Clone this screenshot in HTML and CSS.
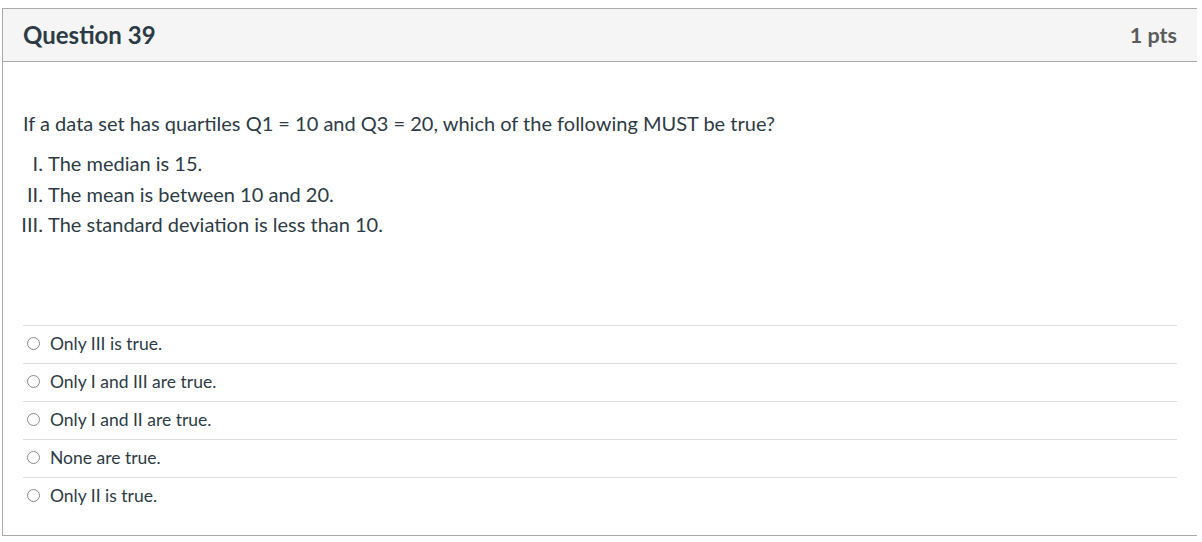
FILE: index.html
```html
<!DOCTYPE html>
<html>
<head>
<meta charset="utf-8">
<link rel="stylesheet" href="styles.css">
</head>
<body>
<div class="card">
  <div class="header">
    <h2 class="title">Question 39</h2>
    <div class="pts">1 pts</div>
  </div>
  <div class="content">
    <div class="qtext">
      <p class="lead">If a data set has quartiles Q1 = 10 and Q3 = 20, which of the following MUST be true?</p>
      <ol class="claims">
        <li>The median is 15.</li>
        <li>The mean is between 10 and 20.</li>
        <li>The standard deviation is less than 10.</li>
      </ol>
    </div>
    <div class="answers">
      <label class="answer"><span class="radio"></span><span class="atext">Only III is true.</span></label>
      <label class="answer"><span class="radio"></span><span class="atext">Only I and III are true.</span></label>
      <label class="answer"><span class="radio"></span><span class="atext">Only I and II are true.</span></label>
      <label class="answer"><span class="radio"></span><span class="atext">None are true.</span></label>
      <label class="answer"><span class="radio"></span><span class="atext">Only II is true.</span></label>
    </div>
  </div>
</div>
</body>
</html>
```
FILE: styles.css
```css
html, body {
  background: #ffffff;
}
body {
  margin: 8px 5px 0 2px;
  font-family: Lato, "Open Sans", sans-serif;
  color: #2d3b45;
}
.card {
  width: 1194px;
  border: 1px solid #aaaaaa;
}
.header {
  display: flex;
  align-items: center;
  justify-content: space-between;
  height: 52px;
  padding: 0 20px;
  background: #f5f5f5;
  border-bottom: 1px solid #aaaaaa;
}
.title {
  margin: 0 0 1px 0;
  font-size: 24px;
  font-weight: 700;
  color: #2d3b45;
}
.pts {
  margin-bottom: 1px;
  font-size: 21.5px;
  font-weight: 700;
  color: #5b5b5b;
}
.content {
  padding: 0 20px 20px 20px;
}
.qtext {
  padding-top: 47px;
  height: 216px;
}
.lead {
  margin: 0;
  font-size: 20px;
  line-height: 28px;
}
.claims {
  margin: 11px 0 0 0;
  padding-left: 25px;
  list-style-type: upper-roman;
  font-size: 20px;
  line-height: 30.5px;
}
.answers {
  display: flex;
  flex-direction: column;
}
.answer {
  box-sizing: border-box;
  display: flex;
  align-items: center;
  height: 38px;
  padding-bottom: 3px;
  border-top: 1px solid #dddddd;
  font-size: 17.5px;
}
.radio {
  width: 11px;
  height: 11px;
  border: 1px solid #8a8a8a;
  border-radius: 50%;
  margin: 0 10px 0 4px;
  flex: none;
}
.atext {
  color: #2d3b45;
}
```
